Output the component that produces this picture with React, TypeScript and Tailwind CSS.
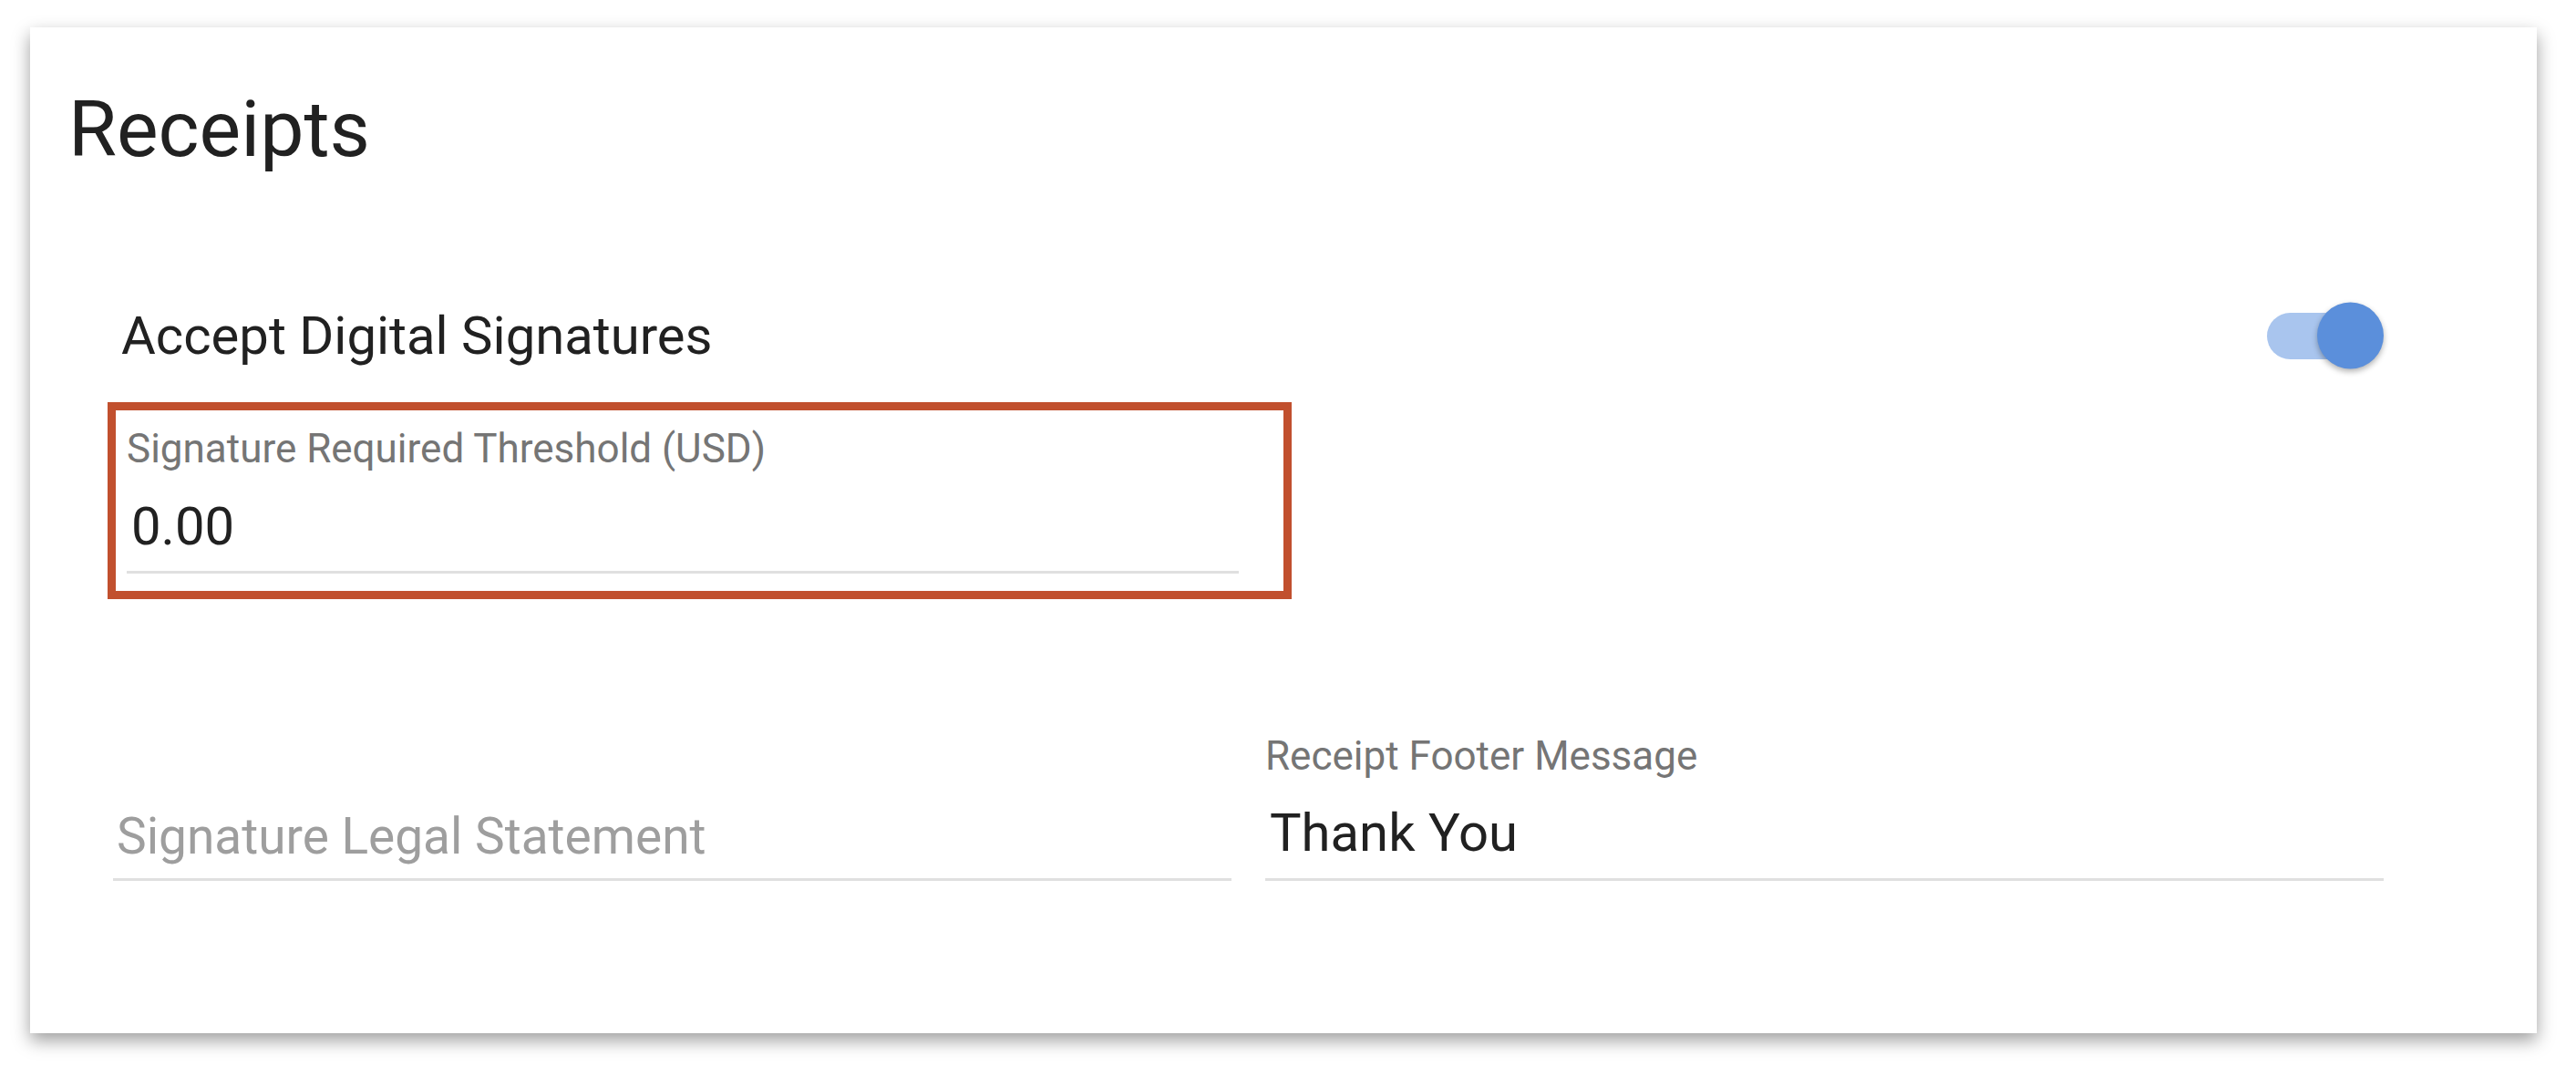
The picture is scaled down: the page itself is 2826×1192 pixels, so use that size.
import { useState } from 'react';

/**
 * Switch - 开关
 */
function Switch({ checked, onChange }: { checked: boolean; onChange: (v: boolean) => void }) {
  return (
    <button
      type="button"
      onClick={() => onChange(!checked)}
      className="relative flex h-[74px] w-[128px] items-center"
    >
      <span
        className={
          checked
            ? 'h-[51px] w-[124px] rounded-full bg-[#a9c5ee]'
            : 'h-[51px] w-[124px] rounded-full bg-[#bdbdbd]'
        }
      />
      <span
        className={
          checked
            ? 'absolute right-0 top-1/2 h-[73px] w-[73px] -translate-y-1/2 rounded-full bg-[#5b8fdb] shadow-[0_3px_6px_rgba(0,0,0,0.3)]'
            : 'absolute left-0 top-1/2 h-[73px] w-[73px] -translate-y-1/2 rounded-full bg-[#fafafa] shadow-[0_3px_6px_rgba(0,0,0,0.3)]'
        }
      />
    </button>
  );
}

export default function App() {
  const [digital, setDigital] = useState(true);

  return (
    <div className="min-h-[1192px] w-full bg-white pl-[33px] pt-[30px] font-['Roboto',sans-serif]">
      <div className="h-[1103px] w-[2750px] bg-white pt-[69px] shadow-[0_8px_18px_rgba(0,0,0,0.38)]">
        <h1 className="pl-[42px] text-[86px] font-normal leading-none text-[#212121]">Receipts</h1>

        <div className="pl-[91px] pr-[168px]">
          {/* Accept Digital Signatures */}
          <div className="mt-[143px] flex h-[80px] items-center justify-between pl-[9px]">
            <span className="text-[58px] leading-none text-[#212121]">Accept Digital Signatures</span>
            <Switch checked={digital} onChange={setDigital} />
          </div>

          {/* Signature Required Threshold */}
          <div className="-ml-[6px] mt-[33px] w-[1299px] border-[9px] border-[#c1502e] pb-[19px] pl-[12px] pt-[20px]">
            <div className="text-[44px] leading-none text-[#757575]">Signature Required Threshold (USD)</div>
            <div className="mt-[34px] pl-[5px] text-[58px] leading-none text-[#212121]">0.00</div>
            <div className="mt-[20px] h-[3px] w-[1220px] bg-[#e0e0e0]" />
          </div>

          {/* Legal statement + footer message */}
          <div className="mt-[150px] grid grid-cols-2 items-end gap-[37px]">
            <div>
              <div className="pl-[4px] text-[55px] leading-none text-[#9e9e9e]">Signature Legal Statement</div>
              <div className="mt-[18px] h-[3px] w-full bg-[#e0e0e0]" />
            </div>
            <div>
              <div className="text-[44px] leading-none text-[#757575]">Receipt Footer Message</div>
              <div className="mt-[33px] pl-[5px] text-[58px] leading-none text-[#212121]">Thank You</div>
              <div className="mt-[21px] h-[3px] w-full bg-[#e0e0e0]" />
            </div>
          </div>
        </div>
      </div>
    </div>
  );
}
